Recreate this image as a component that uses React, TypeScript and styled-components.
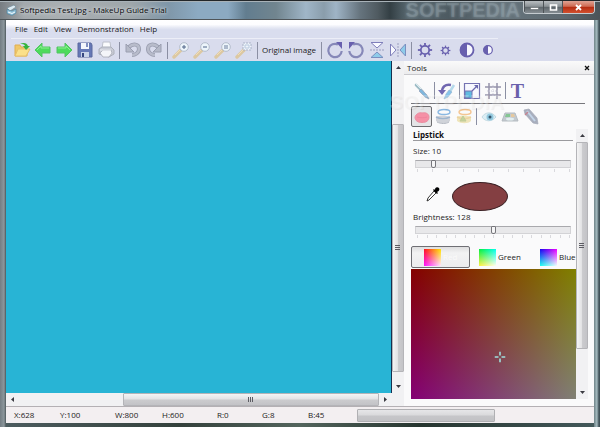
import React, { useState } from "react";
import styled, { createGlobalStyle, css } from "styled-components";

const Global = createGlobalStyle`
  * { box-sizing: border-box; }
  body { margin: 0; font-family: "Open Sans", "Noto Sans", sans-serif; font-size: 8px; line-height: 12px; color: #1b1b22; }
  button { font: inherit; color: inherit; background: none; border: 0; padding: 0; margin: 0; }
`;

const Window = styled.div`
  min-height: 100vh;
  display: flex;
  flex-direction: column;
  position: relative;
  padding: 0 6px 4px 6px;
  background:
    linear-gradient(90deg, #737d83 0, #8c979c 4px, #4b5659 6px, transparent 6px),
    linear-gradient(270deg, #35464d 0, #61737a 2px, #a9bfc4 3px, #6f8388 6px, transparent 6px),
    linear-gradient(90deg, #4d5d60, #34413c 30%, #53655d 50%, #26352f 70%, #445a5c);
`;

const TitleBar = styled.header`
  display: flex;
  align-items: center;
  height: 20px;
  margin: 0 -6px;
  padding-left: 6px;
  gap: 3px;
  border-top: 1px solid #23272a;
  border-bottom: 1px solid #4f5559;
  box-shadow: inset 0 1px 0 #a8b2b8;
  background: linear-gradient(90deg, #777d82 0, #a3a9ad 4%, #a9afb2 10%, #9ea6aa 22%, #7f97a9 28%, #8caac2 33%, #8caac2 38%, #627d8f 41%, #71858f 46%, #a0b6c8 51%, #8a9dab 54%, #9fb4c6 56%, #66747e 60%, #4f5a60 63%, #333f44 65%, #586870 68%, #4d5a61 75%, #66747c 84%, #5d6970 94%, #4a5358 100%);
`;
const Title = styled.h1`
  margin: 0;
  font-size: 8px;
  font-weight: 400;
  line-height: 12px;
  color: #08080c;
  text-shadow: 0 0 4px #dfe3e6, 0 0 3px #d4d9dc;
  white-space: nowrap;
`;
const Brand = styled.span`
  flex: 1;
  text-align: right;
  font: 700 20px/18px "Liberation Sans", sans-serif;
  color: #a4b4bc44;
  text-shadow: 0 0 3px #b4c4cc66;
`;
const Captions = styled.div`
  display: flex;
  align-self: flex-start;
  height: 13px;
  margin-right: 5px;
  border: 1px solid #c5ccd0;
  border-top: 0;
  border-radius: 0 0 4px 4px;
  overflow: hidden;
`;
const Caption = styled.button<{ $close?: boolean }>`
  width: ${p => (p.$close ? 32 : 19)}px;
  display: grid;
  place-items: center;
  border-left: 1px solid #4d5357;
  background: ${p => p.$close
    ? "linear-gradient(#dfa394, #cf6a52 45%, #b32c12 50%, #d2502e)"
    : "linear-gradient(#b9bec1, #8b9296 45%, #5d656a 50%, #858d92)"};
`;

const Client = styled.div`
  flex: 1;
  display: flex;
  flex-direction: column;
  background: #fafafb;
`;
const MenuBar = styled.nav`
  height: 18px;
  display: flex;
  align-items: center;
  gap: 6px;
  padding-left: 9px;
  background: linear-gradient(#ffffff 0, #fdfdff 25%, #e6e9f4 42%, #d9ddee 55%, #d9ddee 100%);
`;
const ToolBar = styled.div`
  height: 23px;
  display: flex;
  align-items: center;
  padding-left: 5px;
  background: #d9dced;
`;
const ToolGroup = styled.div`
  display: flex;
  align-items: center;
  height: 23px;
  border-top: 1px solid #eceef7;
`;
const Tool = styled.button<{ $on?: boolean }>`
  width: 21px;
  height: 21px;
  display: grid;
  place-items: center;
  ${p => p.$on && css`
    border: 1px solid #6d6d70;
    border-radius: 2px;
    background: #e4e4e6;
  `}
`;
const TextTool = styled.button`
  width: 58px;
  white-space: nowrap;
`;
const Sep = styled.i<{ $tight?: boolean }>`
  width: 1px;
  height: 17px;
  margin: ${p => (p.$tight ? "0 1px 0 2px" : "0 2px 0 3px")};
  background: #8b8fa3;
`;

const Work = styled.main`
  flex: 1;
  display: flex;
`;
const CanvasPane = styled.section`
  flex: 1;
  display: grid;
  grid-template-columns: 1fr 12px;
  grid-template-rows: 1fr 13px;
`;
const Canvas = styled.div`
  background: #28b4d5;
  border-right: 1px solid #17304f;
`;
const Bar = styled.div<{ $h?: boolean }>`
  display: flex;
  flex-direction: ${p => (p.$h ? "row" : "column")};
  background: #f1f1f3;
  align-items: stretch;
`;
const BarArrow = styled.button`
  flex: 0 0 13px;
  display: grid;
  place-items: center;
`;
const Space = styled.div<{ $n: number }>`
  flex: ${p => p.$n} 1 0;
`;
const Thumb = styled.div<{ $n: number; $h?: boolean }>`
  flex: ${p => p.$n} 1 0;
  display: grid;
  place-items: center;
  border: 1px solid #b4b4b8;
  border-radius: 1px;
  background: linear-gradient(${p => (p.$h ? "180deg" : "90deg")}, #f4f4f5, #e3e3e5 45%, #cbcbce 55%, #c3c3c7);
`;

const Panel = styled.aside`
  flex: 0 0 190px;
  min-width: 0;
  display: flex;
  flex-direction: column;
  background: #fafafb;
`;
const PanelHead = styled.div`
  height: 14px;
  display: flex;
  align-items: center;
  justify-content: space-between;
  padding: 0 4px 0 3px;
  border-bottom: 1px solid #c9c9cd;
  background: linear-gradient(#fafafa, #ececee);
`;
const PanelBody = styled.div`
  flex: 1;
  display: flex;
  flex-direction: column;
  padding: 0 6px 7px 7px;
`;
const Modes = styled.div<{ $line?: boolean }>`
  display: flex;
  align-items: center;
  height: ${p => (p.$line ? 29 : 25)}px;
  padding-top: ${p => (p.$line ? 3 : 0)}px;
  margin-right: 3px;
  border-bottom: ${p => (p.$line ? "1px solid #77777c" : 0)};
`;
const Scroller = styled.div`
  flex: 1;
  display: flex;
`;
const Settings = styled.div`
  flex: 1;
  min-width: 0;
  display: flex;
  flex-direction: column;
`;
const SideBar = styled(Bar)`
  flex: 0 0 12px;
`;
const Heading = styled.h2`
  margin: 0 3px 4px 2px;
  font-size: 8px;
  line-height: 11px;
  color: #101014;
  border-bottom: 1px solid #9a9a9e;
`;
const Field = styled.div`
  display: flex;
  flex-direction: column;
  padding-left: 2px;
`;
const Range = styled.input`
  appearance: none;
  width: auto;
  height: 11px;
  margin: 1px 5px 0 2px;
  background: transparent;
  &::-webkit-slider-runnable-track {
    height: 8px;
    border: 1px solid #d3d3d6;
    border-top-color: #a9a9ad;
    background: #e8e8ea;
  }
  &::-webkit-slider-thumb {
    appearance: none;
    width: 5px;
    height: 8px;
    margin-top: -1px;
    border: 1px solid #76767b;
    border-radius: 1px 1px 2px 2px;
    background: #f6f6f7;
  }
`;
const Ticks = styled.div`
  display: flex;
  justify-content: space-between;
  margin: 0 6px 0 4px;
  height: 3px;
  i { width: 1px; background: #d9d9dd; }
`;
const ColorRow = styled.div`
  display: flex;
  align-items: center;
  gap: 12px;
  height: 39px;
  padding: 9px 0 0 15px;
`;
const Swatch = styled.div`
  width: 56px;
  height: 29px;
  border: 1px solid #3a2024;
  border-radius: 50%;
  background: #843f42;
`;
const Channels = styled.div`
  display: grid;
  grid-template-columns: 59px 63px 1fr;
  height: 22px;
  margin-top: 8px;
`;
const Channel = styled.button<{ $on?: boolean }>`
  display: flex;
  align-items: center;
  gap: 2px;
  padding-left: 8px;
  border: 1px solid ${p => (p.$on ? "#6f6f74" : "transparent")};
  border-radius: 2px;
  background: ${p => (p.$on ? "linear-gradient(#dededf, #f2f2f3 30%, #ececee)" : "transparent")};
  color: ${p => (p.$on ? "#fafafa" : "inherit")};
  &:first-child { padding-left: 12px; }
  &:last-child { padding-left: 6px; }
`;
const Chip = styled.i<{ $from: string; $to: string; $down: string }>`
  width: 17px;
  height: 17px;
  flex: none;
  background: linear-gradient(90deg, ${p => p.$from}, ${p => p.$to}), linear-gradient(#000000, ${p => p.$down});
  background-blend-mode: screen;
`;
const Picker = styled.div`
  flex: 1;
  margin-top: 1px;
  position: relative;
  background: linear-gradient(to right, #840000, #808000), linear-gradient(#000000, #000074);
  background-blend-mode: screen;
`;
const Cross = styled.svg`
  position: absolute;
  left: 54%;
  top: 68%;
  transform: translate(-50%, -50%);
`;
const Watermark = styled.span`
  position: absolute;
  right: 96px;
  top: 91px;
  font: 700 20px/22px "Liberation Sans", sans-serif;
  color: #ffffff40;
  text-shadow: 1px 1px 1px #0000000c;
  pointer-events: none;
`;

const Status = styled.footer`
  height: 17px;
  display: grid;
  grid-template-columns: 46px 55px 47px 55px 45px 46px 49px 138px;
  align-items: center;
  padding-left: 8px;
  border-top: 1px solid #b4b0b4;
  background: #f3eff1;
`;
const Meter = styled.div`
  height: 13px;
  border: 1px solid #b0b0b3;
  border-radius: 1px;
  background: linear-gradient(#e6e6e8, #dadadc 45%, #c6c6c9 55%, #c2c2c5);
`;

const P = "#6860ae";

const Svg = ({ s = 18, children }: { s?: number; children: React.ReactNode }) => (
  <svg width={s} height={s} viewBox="0 0 18 18" fill="none" aria-hidden="true">{children}</svg>
);

const AppIcon = () => (
  <svg width="11" height="12" viewBox="0 0 11 12" aria-hidden="true">
    <path d="M1 4 8 1l2 2-6 4z" fill="#dcebf2" stroke="#6a8493" strokeWidth=".6" />
    <path d="M1 5.500 6 7l4-2v4l-4 2.500-5-2z" fill="#8fc0d8" stroke="#4d7f9b" strokeWidth=".6" />
    <path d="m2 8 4 1.500 3-1.500" stroke="#f6fbff" fill="none" />
  </svg>
);
const Open = () => (
  <Svg>
    <path d="M2 4h5l1 2h6v9H2z" fill="#f0c768" stroke="#e0ae50" />
    <path d="m2 15 3-7h12l-4 7z" fill="#fbe08a" stroke="#e8c068" />
    <path d="M7 3c4-2 7-1 8 2h2l-4 4-3-4h2c-1-2-2-2-5-2z" fill="#35b43c" />
  </Svg>
);
const Arrow = ({ right }: { right?: boolean }) => (
  <Svg>
    <path d={right ? "M17 9 10 2v4H2v6h8v4z" : "M1 9l7-7v4h8v6H8v4z"} fill="#4edb5c" stroke="#52c465" strokeLinejoin="round" />
    <path d={right ? "M3 7h8V5l4 4" : "M15 7H7V5L3 9"} stroke="#8bf091" />
  </Svg>
);
const Save = () => (
  <Svg>
    <path d="M2 2h13l1 2v12H2z" fill="#6678b6" stroke="#5b699e" />
    <path d="M5 2h8v6H5z" fill="#f4f6fb" />
    <path d="M5 11h8v5H5z" fill="#c9d3e8" />
    <path d="M6 12h2v4H6z" fill="#36467f" />
    <path d="M10 2h2v4h-2z" fill="#8190c0" />
  </Svg>
);
const Print = () => (
  <Svg>
    <path d="M5 8 6 1h7l1 7z" fill="#fafbfd" stroke="#bcc0cb" />
    <path d="m2 8 3-2h9l3 3v4l-5 3-10-3z" fill="#c9ccd6" stroke="#acb0bb" />
    <path d="m3 12 3-3h8l1 3-3 4H6z" fill="#f4f5f9" stroke="#9da1ac" strokeWidth=".7" />
    <path d="M3 9h11" stroke="#eceef4" />
  </Svg>
);
const Undo = ({ flip }: { flip?: boolean }) => (
  <Svg>
    <g transform={flip ? "translate(18 0) scale(-1 1)" : undefined}>
      <path d="M5 6c4-4 10-3 10 2 0 4-4 6-7 6" stroke="#9a9eb0" strokeWidth="4" />
      <path d="M5 6c4-4 10-3 10 2 0 4-4 6-7 6" stroke="#b8bccb" strokeWidth="2.400" />
      <path d="M2 3v8h8z" fill="#b5b9c8" stroke="#9a9eb0" />
    </g>
  </Svg>
);
const Zoom = ({ kind }: { kind: "in" | "out" | "one" | "fit" }) => (
  <Svg>
    <path d="m2 16 7-7" stroke="#dcc8a2" strokeWidth="3.400" strokeLinecap="round" />
    <path d="m3 14 5-5" stroke="#f1ddb5" />
    {kind === "fit"
      ? <path d="M8 2h8v7H8z" fill="#eef4fb" stroke="#a8b1c7" strokeDasharray="2 1" />
      : <circle cx="12" cy="6" r="4.300" fill="#edf5fb" stroke="#b3bccb" />}
    {kind === "in" && <path d="M10 6h4M12 4v4" stroke="#4f6488" />}
    {kind === "out" && <path d="M10 6h4" stroke="#4f6488" />}
    {kind === "one" && <path d="M10 5h4M10 7h4" stroke="#6d7f9d" />}
    {kind === "fit" && <path d="M10 4h4v3h-4z" stroke="#b8c8dd" />}
  </Svg>
);
const Rotate = ({ flip }: { flip?: boolean }) => (
  <Svg>
    <g transform={flip ? "translate(18 0) scale(-1 1)" : undefined}>
      <path d="M12 3.500A6.700 6.700 0 1 0 15.700 10" stroke="#8688b8" strokeWidth="2.200" />
      <path d="M10 1h6v7z" fill={P} />
    </g>
  </Svg>
);
const Mirror = ({ turn }: { turn?: boolean }) => (
  <Svg>
    <g transform={turn ? "rotate(-90 9 9)" : undefined}>
      <path d="M3 1.500h12L9 7z" fill="#f8f9ff" stroke="#7f7fba" />
      <path d="M3 16.500h12L9 11z" fill="#8ecbe9" stroke="#7a8fc0" />
      <path d="M2 9h14" stroke="#9a9dbe" strokeDasharray="2 1" />
    </g>
  </Svg>
);
const Sun = ({ s }: { s: number }) => (
  <Svg s={s}>
    <circle cx="9" cy="9" r="4.700" stroke={P} strokeWidth="2" />
    {[0, 45, 90, 135, 180, 225, 270, 315].map(a => (
      <path key={a} d="M9 1v3" stroke={P} strokeWidth="2" transform={`rotate(${a} 9 9)`} />
    ))}
  </Svg>
);
const Contrast = ({ s }: { s: number }) => (
  <Svg s={s}>
    <circle cx="9" cy="9" r="6.500" fill="#f7f8ff" stroke={P} strokeWidth="1.800" />
    <path d="M9 2a7 7 0 0 0 0 14z" fill={P} />
  </Svg>
);
const Brush = () => (
  <Svg>
    <path d="m3 3 7 7" stroke="#9dbcc6" strokeWidth="2.600" strokeLinecap="round" />
    <path d="m3 2 8 8" stroke="#dcebf0" />
    <path d="m8 7 6 6 2 4-4-2-6-6z" fill="#7fb6dc" stroke="#8f9bb2" strokeWidth=".6" />
  </Svg>
);
const HistoryBrush = () => (
  <Svg>
    <path d="M4 10c0-5 3-8 9-7" stroke="#7167b0" strokeWidth="2.400" />
    <path d="M0 8h8l-4 5z" fill="#7167b0" />
    <path d="m16 3-5 8" stroke="#b5d9ea" strokeWidth="2.600" />
    <path d="m11 8 3 2-4 5-4 2 2-5z" fill="#86c4ea" stroke="#93aecb" strokeWidth=".6" />
  </Svg>
);
const Resize = () => (
  <Svg>
    <path d="M1.500 1.500h15v15h-15z" fill="#f7f8fe" stroke="#7573b2" strokeWidth="1.200" />
    <path d="M2 9h7v7H2z" fill="#5fbbe0" stroke="#7573b2" />
    <path d="m9 9 5-5" stroke="#6a68ad" strokeWidth="1.200" />
    <path d="M11 3h4v4z" fill="#6a68ad" />
  </Svg>
);
const Crop = () => (
  <Svg>
    <path d="M5 1v16M13 1v16M1 5h16M1 13h16" stroke="#9694ac" strokeWidth="1.500" />
    <path d="M9 3v12M3 9h12" stroke="#cfcfdd" strokeDasharray="1 1" />
  </Svg>
);
const TextIcon = styled.b`
  font: 700 20px/20px "Liberation Serif", serif;
  color: #6a60ac;
`;
const Lips = () => (
  <Svg>
    <path d="M2 9c1-3 4-5 7-4 4-1 7 1 7 4 0 4-3 5.500-7 5.500S2 13 2 9z" fill="#f591a6" stroke="#ea8fa2" />
    <path d="M4 9c4 1 7 1 10 0" stroke="#ee8099" strokeWidth=".8" />
  </Svg>
);
const Jar = ({ warm }: { warm?: boolean }) => (
  <Svg>
    <ellipse cx="10" cy="4" rx="6" ry="2.500" stroke={warm ? "#f4c592" : "#8ab8e2"} strokeWidth="1.400" />
    <path d="M2 9c3-2 10-2 14 0v4c-3 3-10 3-14 0z" fill={warm ? "#efe5bb" : "#d0d3d9"} />
    <path d="M2 9c4 2 10 2 14 0" stroke={warm ? "#edd2a0" : "#9db4ce"} strokeWidth="1.500" />
    <path d={warm ? "M5 13 8 8l3 5z" : "M3 14c4 2 9 2 12 0"} stroke={warm ? "#c0cc98" : "#b4b9c2"} fill={warm ? "#c5d29c" : "none"} />
  </Svg>
);
const Eye = () => (
  <Svg>
    <path d="M2 9c3-5 10-6 14 0-4 5-11 5-14 0z" fill="#dceef4" stroke="#c3dae3" />
    <circle cx="10" cy="9" r="3.500" fill="#92c8de" />
    <circle cx="10" cy="9" r="1.500" fill="#33546b" />
  </Svg>
);
const Shadow = () => (
  <Svg>
    <path d="M4 5h10l3 8H1z" fill="#c3cad0" stroke="#b4bbc1" />
    <path d="M5 6h4v3H4z" fill="#86c694" />
    <path d="M10 6h3l1 3h-4z" fill="#e4c8a0" />
    <ellipse cx="9" cy="11" rx="4" ry="1.500" fill="#e3eff0" />
  </Svg>
);
const Tube = () => (
  <Svg>
    <path d="M2 2 7 1l8 9 1 6-5-1-8-9z" fill="#a8aebd" stroke="#a3a9b8" strokeWidth=".7" />
    <path d="m5 3 8 10" stroke="#c3d4e8" strokeWidth="2" />
    <path d="m3 7 3-3" stroke="#c68491" strokeWidth="1.500" />
  </Svg>
);
const Dropper = () => (
  <svg width="14" height="15" viewBox="0 0 14 15" aria-hidden="true">
    <path d="m8 4 2 2-7 7-2 1 1-3z" fill="#fff" stroke="#222" strokeWidth=".9" />
    <path d="m7 3 4 4 1-1-1-1c3-1 3-4 1-4.500C10 0 9 1 9 3L8 2z" fill="#000" />
  </svg>
);
const Tri = ({ d }: { d: "up" | "down" | "left" | "right" }) => (
  <svg width="5" height="5" viewBox="0 0 5 5" aria-hidden="true">
    <path fill="#3b3b42" d={{ up: "M0 4h5L2.500 1z", down: "M0 1h5L2.500 4z", left: "M4 0v5L1 2.500z", right: "M1 0v5l3-2.500z" }[d]} />
  </svg>
);
const Grip = ({ h }: { h?: boolean }) => (
  <svg width="6" height="6" viewBox="0 0 6 6" aria-hidden="true">
    <path d={h ? "M.5 0v5M2.500 0v5M4.500 0v5" : "M0 .5h5M0 2.500h5M0 4.500h5"} stroke="#5c5c63" />
  </svg>
);

export default function App() {
  const [size, setSize] = useState(10);
  const [bright, setBright] = useState(128);
  return (
    <Window>
      <Global />
      <TitleBar>
        <AppIcon />
        <Title>Softpedia Test.jpg - MakeUp Guide Trial</Title>
        <Brand aria-hidden="true">SOFTPEDIA</Brand>
        <Captions>
          <Caption aria-label="Minimize">
            <svg width="9" height="7" viewBox="0 0 9 7"><path d="M.5 3.500h8v2h-8z" fill="#fff" stroke="#53595d" strokeWidth=".5" /></svg>
          </Caption>
          <Caption aria-label="Maximize">
            <svg width="9" height="7" viewBox="0 0 9 7"><path d="M1.500 1h6v5h-6z" fill="none" stroke="#fff" strokeWidth="1.600" /></svg>
          </Caption>
          <Caption $close aria-label="Close">
            <svg width="9" height="7" viewBox="0 0 9 7"><path d="m2 1 5 5M7 1 2 6" stroke="#fff" strokeWidth="1.800" /></svg>
          </Caption>
        </Captions>
      </TitleBar>
      <Client>
        <MenuBar>
          {["File", "Edit", "View", "Demonstration", "Help"].map(m => <button key={m}>{m}</button>)}
        </MenuBar>
        <ToolBar>
          <ToolGroup>
            <Tool aria-label="Open"><Open /></Tool>
            <Tool aria-label="Previous"><Arrow /></Tool>
            <Tool aria-label="Next"><Arrow right /></Tool>
            <Tool aria-label="Save"><Save /></Tool>
            <Tool aria-label="Print"><Print /></Tool>
            <Sep />
            <Tool aria-label="Undo"><Undo /></Tool>
            <Tool aria-label="Redo"><Undo flip /></Tool>
            <Sep />
            <Tool aria-label="Zoom in"><Zoom kind="in" /></Tool>
            <Tool aria-label="Zoom out"><Zoom kind="out" /></Tool>
            <Tool aria-label="Actual size"><Zoom kind="one" /></Tool>
            <Tool aria-label="Fit"><Zoom kind="fit" /></Tool>
            <Sep />
            <TextTool>Original image</TextTool>
            <Sep />
            <Tool aria-label="Rotate right"><Rotate /></Tool>
            <Tool aria-label="Rotate left"><Rotate flip /></Tool>
            <Tool aria-label="Flip vertically"><Mirror /></Tool>
            <Tool aria-label="Flip horizontally"><Mirror turn /></Tool>
            <Sep />
            <Tool aria-label="Brighter"><Sun s={16} /></Tool>
            <Tool aria-label="Darker"><Sun s={11} /></Tool>
            <Tool aria-label="More contrast"><Contrast s={18} /></Tool>
            <Tool aria-label="Less contrast"><Contrast s={12} /></Tool>
          </ToolGroup>
        </ToolBar>
        <Work>
          <CanvasPane>
            <Canvas />
            <Bar>
              <BarArrow aria-label="Scroll up"><Tri d="up" /></BarArrow>
              <Space $n={50} />
              <Thumb $n={249}><Grip /></Thumb>
              <Space $n={8} />
              <BarArrow aria-label="Scroll down"><Tri d="down" /></BarArrow>
            </Bar>
            <Bar $h>
              <BarArrow aria-label="Scroll left"><Tri d="left" /></BarArrow>
              <Space $n={105} />
              <Thumb $h $n={255}><Grip h /></Thumb>
              <BarArrow aria-label="Scroll right"><Tri d="right" /></BarArrow>
            </Bar>
            <Bar />
          </CanvasPane>
          <Panel>
            <PanelHead>
              <span>Tools</span>
              <button aria-label="Close tools">
                <svg width="6" height="6" viewBox="0 0 6 6"><path d="m1 1 4 4M5 1 1 5" stroke="#111" strokeWidth="1.300" /></svg>
              </button>
            </PanelHead>
            <PanelBody>
              <Modes $line>
                <Tool aria-label="Brush"><Brush /></Tool>
                <Sep $tight />
                <Tool aria-label="History brush"><HistoryBrush /></Tool>
                <Sep $tight />
                <Tool aria-label="Resize"><Resize /></Tool>
                <Tool aria-label="Crop"><Crop /></Tool>
                <Sep $tight />
                <Tool aria-label="Text"><TextIcon>T</TextIcon></Tool>
              </Modes>
              <Modes>
                <Tool $on aria-label="Lipstick"><Lips /></Tool>
                <Tool aria-label="Powder"><Jar /></Tool>
                <Tool aria-label="Foundation"><Jar warm /></Tool>
                <Sep $tight />
                <Tool aria-label="Eye color"><Eye /></Tool>
                <Tool aria-label="Eye shadow"><Shadow /></Tool>
                <Tool aria-label="Eye pencil"><Tube /></Tool>
              </Modes>
              <Scroller>
                <Settings>
                  <Heading>Lipstick</Heading>
                  <Field>
                    <label htmlFor="size">Size: {size}</label>
                    <Range id="size" type="range" min={0} max={100} value={size} onChange={e => setSize(+e.target.value)} />
                    <Ticks>{Array.from({ length: 11 }, (_, i) => <i key={i} />)}</Ticks>
                  </Field>
                  <ColorRow>
                    <button aria-label="Pick color"><Dropper /></button>
                    <Swatch />
                  </ColorRow>
                  <Field>
                    <label htmlFor="bright">Brightness: {bright}</label>
                    <Range id="bright" type="range" min={0} max={256} value={bright} onChange={e => setBright(+e.target.value)} />
                    <Ticks>{Array.from({ length: 17 }, (_, i) => <i key={i} />)}</Ticks>
                  </Field>
                  <Channels>
                    <Channel $on><Chip $from="#ff1020" $to="#ffe600" $down="#0000ff" />Red</Channel>
                    <Channel><Chip $from="#00f040" $to="#00fff0" $down="#ff0000" />Green</Channel>
                    <Channel><Chip $from="#1800f0" $to="#f000ff" $down="#00ff00" />Blue</Channel>
                  </Channels>
                  <Picker>
                    <Cross width="11" height="11" viewBox="0 0 11 11" aria-hidden="true">
                      <path d="M5.500 0v4M5.500 7v4M0 5.500h4M7 5.500h4" stroke="#9fdfdd" strokeWidth="1.600" />
                    </Cross>
                  </Picker>
                </Settings>
                <SideBar>
                  <BarArrow aria-label="Scroll up"><Tri d="up" /></BarArrow>
                  <Thumb $n={207}><Grip /></Thumb>
                  <Space $n={37} />
                  <BarArrow aria-label="Scroll down"><Tri d="down" /></BarArrow>
                </SideBar>
              </Scroller>
            </PanelBody>
          </Panel>
        </Work>
        <Status>
          <span>X:628</span><span>Y:100</span><span>W:800</span><span>H:600</span>
          <span>R:0</span><span>G:8</span><span>B:45</span>
          <Meter />
        </Status>
      </Client>
      <Watermark aria-hidden="true">SOFTPEDIA</Watermark>
    </Window>
  );
}
